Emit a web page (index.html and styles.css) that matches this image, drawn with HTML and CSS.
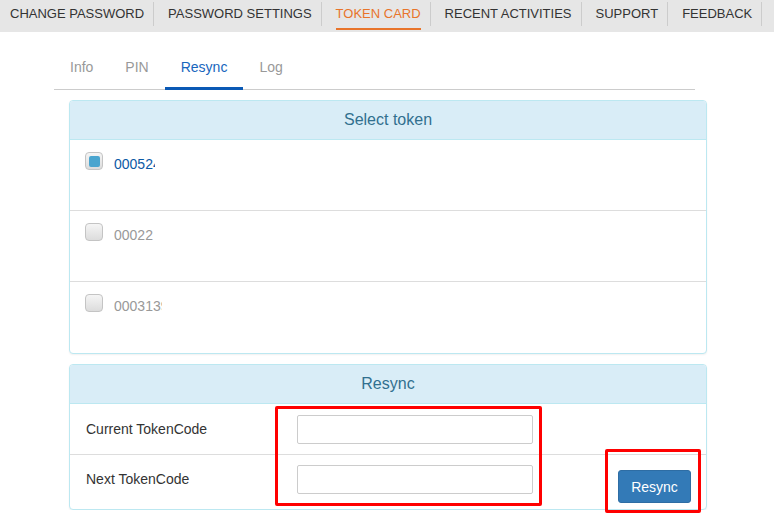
FILE: index.html
```html
<!DOCTYPE html>
<html lang="en">

<head>
    <meta charset="UTF-8" />
    <meta name="viewport" content="width=device-width, initial-scale=1.0" />
    <title>Token Card - Resync</title>
    <link rel="stylesheet" href="styles.css">
</head>

<body>
    <ul class="topnav">
        <li><span>CHANGE PASSWORD</span></li>
        <li><span>PASSWORD SETTINGS</span></li>
        <li class="active"><span>TOKEN CARD</span></li>
        <li><span>RECENT ACTIVITIES</span></li>
        <li><span>SUPPORT</span></li>
        <li><span>FEEDBACK</span></li>
    </ul>

    <ul class="tabs">
        <li>Info</li>
        <li>PIN</li>
        <li class="active">Resync</li>
        <li>Log</li>
    </ul>

    <div class="panel">
        <div class="panel-heading">Select token</div>
        <div class="token-row">
            <span class="check checked"></span>
            <span class="token-no selected" style="width:41px">0005243</span>
        </div>
        <div class="token-row">
            <span class="check"></span>
            <span class="token-no" style="width:39px">00022</span>
        </div>
        <div class="token-row">
            <span class="check"></span>
            <span class="token-no" style="width:48px">0003139</span>
        </div>
    </div>

    <div class="panel">
        <div class="panel-heading">Resync</div>
        <div class="form-row">
            <label for="current">Current TokenCode</label>
            <input type="text" id="current" />
        </div>
        <div class="form-row last">
            <label for="next">Next TokenCode</label>
            <input type="text" id="next" />
            <button class="btn">Resync</button>
        </div>
    </div>

    <!-- highlight marks -->
    <div class="mark mark-inputs"></div>
    <div class="mark mark-button"></div>
</body>

</html>
```

FILE: styles.css
```css
body {
    margin: 0;
    font-family: 'Liberation Sans', Arial, sans-serif;
    font-size: 14px;
    color: #333;
    background: #fff;
}

ul {
    list-style: none;
    margin: 0;
    padding: 0;
}

/* top navigation */
.topnav {
    display: flex;
    height: 32px;
    background: #e6e6e6;
    font-size: 13px;
    white-space: nowrap;
}

.topnav li {
    position: relative;
    flex-shrink: 0;
    padding: 0 10px 0 14px;
}

.topnav li:first-child {
    padding-left: 10px;
}

.topnav li::after {
    content: '';
    position: absolute;
    right: 0;
    top: 2px;
    height: 24px;
    border-right: 1px solid #ccc;
}

.topnav span {
    display: block;
    line-height: 28px;
    border-bottom: 2px solid transparent;
}

.topnav li.active span {
    color: #e8742a;
    border-bottom-color: #e8742a;
}

/* tabs */
.tabs {
    display: flex;
    margin: 15px 79px 0 54px;
    border-bottom: 1px solid #ccc;
}

.tabs li {
    padding: 0 16px;
    line-height: 40px;
    color: #999;
    border-bottom: 3px solid transparent;
    margin-bottom: -1px;
}

.tabs li.active {
    color: #1866bd;
    border-bottom-color: #0a59b5;
}

/* panels */
.panel {
    width: 636px;
    margin: 10px 0 0 69px;
    border: 1px solid #bce8f1;
    border-radius: 4px;
    background: #fff;
    box-shadow: 0 1px 2px rgba(0, 0, 0, 0.06);
}

.panel-heading {
    height: 38px;
    line-height: 38px;
    text-align: center;
    font-size: 16px;
    color: #31708f;
    background: #d9edf7;
    border-bottom: 1px solid #bce8f1;
    border-radius: 3px 3px 0 0;
}

.token-row {
    display: flex;
    align-items: flex-start;
    height: 58px;
    padding: 12px 15px 0;
    border-top: 1px solid #ddd;
}

.token-row:nth-child(2) {
    border-top: none;
}

.token-row:last-child {
    height: 59px;
}

.check {
    box-sizing: border-box;
    width: 18px;
    height: 18px;
    border: 1px solid #c4c4c4;
    border-radius: 4px;
    background: linear-gradient(#f5f5f5, #dcdcdc);
    display: flex;
    align-items: center;
    justify-content: center;
}

.check.checked::before {
    content: '';
    width: 11px;
    height: 11px;
    border-radius: 2px;
    background: #4aa5cf;
}

.token-no {
    display: block;
    margin: 4px 0 0 11px;
    overflow: hidden;
    white-space: nowrap;
    color: #999;
}

.token-no.selected {
    color: #0c5aa6;
}

/* resync form */
.form-row {
    display: flex;
    align-items: center;
    height: 50px;
    padding: 0 15px 0 16px;
    border-top: 1px solid #ddd;
}

.form-row:nth-child(2) {
    border-top: none;
}

.form-row.last {
    align-items: flex-start;
    height: 44px;
    padding-top: 10px;
}

.form-row label {
    width: 211px;
    line-height: 29px;
}

.form-row input {
    box-sizing: border-box;
    width: 236px;
    height: 29px;
    border: 1px solid #ccc;
    border-radius: 2px;
    padding: 4px 8px;
    font: inherit;
}

.btn {
    margin: 5px 0 0 auto;
    width: 73px;
    height: 33px;
    font: inherit;
    font-size: 14px;
    color: #fff;
    background: #337ab7;
    border: 1px solid #2e6da4;
    border-radius: 3px;
    cursor: pointer;
}

/* red highlight boxes drawn over the form */
.mark {
    position: absolute;
    box-sizing: border-box;
    border: 3px solid #f00;
    border-radius: 2px;
}

.mark-inputs {
    left: 275px;
    top: 406px;
    width: 267px;
    height: 100px;
}

.mark-button {
    left: 605px;
    top: 449px;
    width: 96px;
    height: 64px;
}
```
